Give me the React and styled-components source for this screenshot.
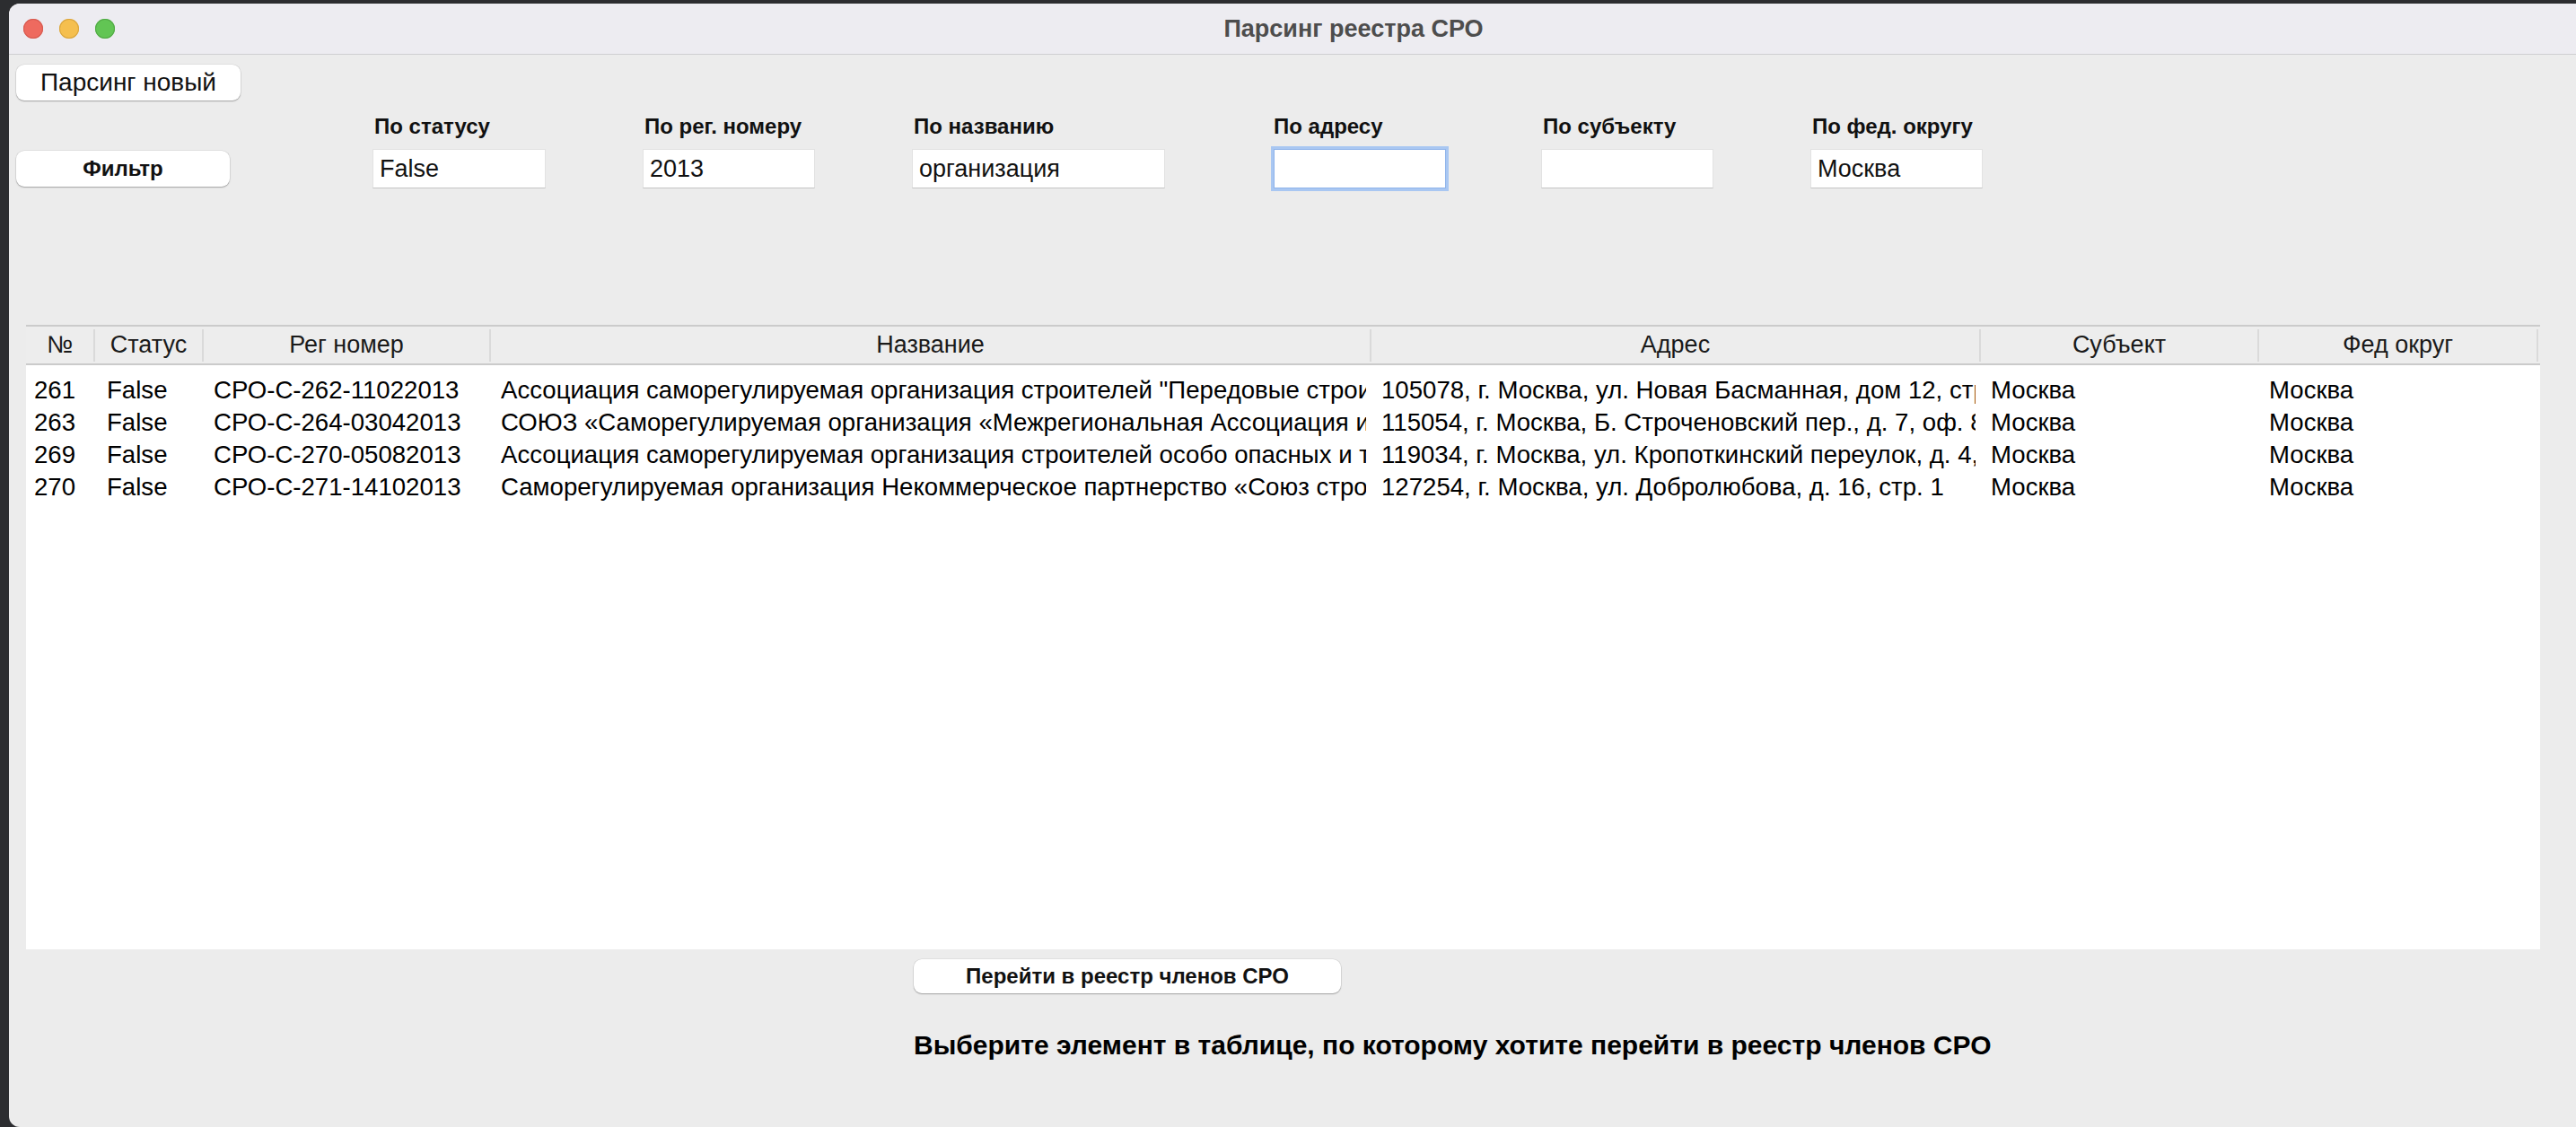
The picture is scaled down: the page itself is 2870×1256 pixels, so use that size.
import React from "react";
import styled, { createGlobalStyle } from "styled-components";

const GlobalStyle = createGlobalStyle`
  html, body {
    margin: 0;
    padding: 0;
    background: #2c2d30;
    overflow: hidden;
  }
  body {
    font-family: "Liberation Sans", Arial, sans-serif;
  }
`;

const Screen = styled.div`
  width: 2870px;
  height: 1256px;
  padding: 4px 0 0 10px;
  box-sizing: border-box;
  overflow: hidden;
`;

const Window = styled.div`
  width: 2996px;
  height: 1252px;
  background: #ececec;
  border-radius: 12px;
  overflow: hidden;
  display: flex;
  flex-direction: column;
`;

const TitleBar = styled.div`
  height: 56px;
  flex: none;
  background: #edecf1;
  border-bottom: 1px solid #cfcfd2;
  display: flex;
  align-items: center;
  position: relative;
`;

const Lights = styled.div`
  display: flex;
  gap: 18px;
  padding-left: 16px;
`;

const Light = styled.span`
  width: 22px;
  height: 22px;
  border-radius: 50%;
  background: ${(p) => p.color};
  box-shadow: inset 0 0 0 1px ${(p) => p.edge};
`;

const Title = styled.div`
  position: absolute;
  left: 0;
  right: 0;
  text-align: center;
  font-size: 27px;
  font-weight: bold;
  color: #4d4d4d;
`;

const Content = styled.div`
  padding: 11px 0 0 8px;
  display: flex;
  flex-direction: column;
`;

const MacButton = styled.button`
  width: ${(p) => p.w}px;
  height: ${(p) => p.h || 40}px;
  background: #ffffff;
  border: none;
  border-radius: 9px;
  box-shadow: 0 1px 1.5px rgba(0, 0, 0, 0.28), 0 0 0 0.5px rgba(0, 0, 0, 0.1);
  font-family: "Liberation Sans", Arial, sans-serif;
  font-size: ${(p) => (p.bold ? 24 : 28)}px;
  font-weight: ${(p) => (p.bold ? "bold" : "normal")};
  color: #111;
  padding: 0;
  flex: none;
`;

const FilterGrid = styled.div`
  margin-top: 15px;
  display: grid;
  grid-template-columns: 397px 301px 300px 401px 300px 300px 300px;
  grid-template-rows: 28px 44px;
  row-gap: 11px;
`;

const FilterButtonCell = styled.div`
  grid-row: 2;
  grid-column: 1;
  display: flex;
  align-items: center;
`;

const Label = styled.div`
  grid-row: 1;
  font-size: 24px;
  font-weight: bold;
  color: #111;
  line-height: 28px;
  padding-left: 2px;
`;

const Input = styled.input`
  grid-row: 2;
  width: ${(p) => p.w}px;
  height: 44px;
  box-sizing: border-box;
  background: #fff;
  border: 1px solid #e2e2e2;
  border-bottom-color: #c4c4c4;
  padding: 0 7px;
  font-family: "Liberation Sans", Arial, sans-serif;
  font-size: 27px;
  color: #111;
  outline: none;
  ${(p) =>
    p.focused &&
    `
    border: 1px solid #8fb4ea;
    box-shadow: 0 0 0 3px #a9c7f2;
    margin-left: 2px;
  `}
`;

const Table = styled.div`
  margin: 152px 0 0 11px;
  width: 2801px;
  height: 696px;
  background: #fff;
  display: flex;
  flex-direction: column;
`;

const Header = styled.div`
  display: grid;
  grid-template-columns: ${(p) => p.cols};
  height: 41px;
  background: #ededed;
  border-top: 2px solid #cbcbcb;
  border-bottom: 2px solid #cbcbcb;
  align-items: center;
`;

const HeadCell = styled.div`
  height: 36px;
  display: flex;
  align-items: center;
  justify-content: center;
  font-size: 27px;
  color: #1a1a1a;
  border-right: 2px solid #dadada;
  box-sizing: border-box;
  white-space: nowrap;
  overflow: hidden;
`;

const Body = styled.div`
  padding-top: 10px;
`;

const Row = styled.div`
  display: grid;
  grid-template-columns: ${(p) => p.cols};
  height: 36px;
  align-items: center;
`;

const Cell = styled.div`
  padding: 0 6px 0 ${(p) => p.pad}px;
  min-width: 0;
`;

const CellText = styled.span`
  display: block;
  overflow: hidden;
  white-space: nowrap;
  font-size: 27.6px;
  color: #000;
`;

const Bottom = styled.div`
  margin: 11px 0 0 1000px;
  display: flex;
  flex-direction: column;
  align-items: flex-start;
`;

const Hint = styled.div`
  margin-top: 41px;
  font-size: 30px;
  font-weight: bold;
  color: #000;
`;

const widths = [77, 121, 320, 981, 679, 310, 311];
const cols = widths.map((w) => w + "px").join(" ");
const pads = [9, 13, 11, 11, 11, 11, 11];

const headers = ["№", "Статус", "Рег номер", "Название", "Адрес", "Субъект", "Фед округ"];

const rows = [
  [
    "261",
    "False",
    "СРО-С-262-11022013",
    'Ассоциация саморегулируемая организация строителей "Передовые строительные технологии"',
    "105078, г. Москва, ул. Новая Басманная, дом 12, строение 2",
    "Москва",
    "Москва",
  ],
  [
    "263",
    "False",
    "СРО-С-264-03042013",
    "СОЮЗ «Саморегулируемая организация «Межрегиональная Ассоциация инженеров-строителей»",
    "115054, г. Москва, Б. Строченовский пер., д. 7, оф. 8",
    "Москва",
    "Москва",
  ],
  [
    "269",
    "False",
    "СРО-С-270-05082013",
    "Ассоциация саморегулируемая организация строителей особо опасных и технически сложных объектов",
    "119034, г. Москва, ул. Кропоткинский переулок, д. 4, стр. 1",
    "Москва",
    "Москва",
  ],
  [
    "270",
    "False",
    "СРО-С-271-14102013",
    "Саморегулируемая организация Некоммерческое партнерство «Союз строителей»",
    "127254, г. Москва, ул. Добролюбова, д. 16, стр. 1",
    "Москва",
    "Москва",
  ],
];

const filters = [
  { label: "По статусу", value: "False", w: 193 },
  { label: "По рег. номеру", value: "2013", w: 192 },
  { label: "По названию", value: "организация", w: 282 },
  { label: "По адресу", value: "", w: 192, focused: true },
  { label: "По субъекту", value: "", w: 192 },
  { label: "По фед. округу", value: "Москва", w: 192 },
];

const App = () => (
  <Screen>
    <GlobalStyle />
    <Window>
      <TitleBar>
        <Lights>
          <Light color="#ee6a5f" edge="#d65a50" />
          <Light color="#f5bf4f" edge="#d9a53f" />
          <Light color="#62c554" edge="#51a945" />
        </Lights>
        <Title>Парсинг реестра СРО</Title>
      </TitleBar>
      <Content>
        <MacButton w={250}>Парсинг новый</MacButton>
        <FilterGrid>
          <FilterButtonCell>
            <MacButton w={238} bold>
              Фильтр
            </MacButton>
          </FilterButtonCell>
          {filters.map((f, i) => (
            <React.Fragment key={f.label}>
              <Label style={{ gridColumn: i + 2 }}>{f.label}</Label>
              <Input
                style={{ gridColumn: i + 2 }}
                w={f.w}
                focused={f.focused}
                defaultValue={f.value}
              />
            </React.Fragment>
          ))}
        </FilterGrid>
        <Table>
          <Header cols={cols}>
            {headers.map((h) => (
              <HeadCell key={h}>{h}</HeadCell>
            ))}
          </Header>
          <Body>
            {rows.map((r) => (
              <Row key={r[0]} cols={cols}>
                {r.map((c, i) => (
                  <Cell key={i} pad={pads[i]}>
                    <CellText>{c}</CellText>
                  </Cell>
                ))}
              </Row>
            ))}
          </Body>
        </Table>
        <Bottom>
          <MacButton w={476} h={38} bold>
            Перейти в реестр членов СРО
          </MacButton>
          <Hint>Выберите элемент в таблице, по которому хотите перейти в реестр членов СРО</Hint>
        </Bottom>
      </Content>
    </Window>
  </Screen>
);

export default App;
